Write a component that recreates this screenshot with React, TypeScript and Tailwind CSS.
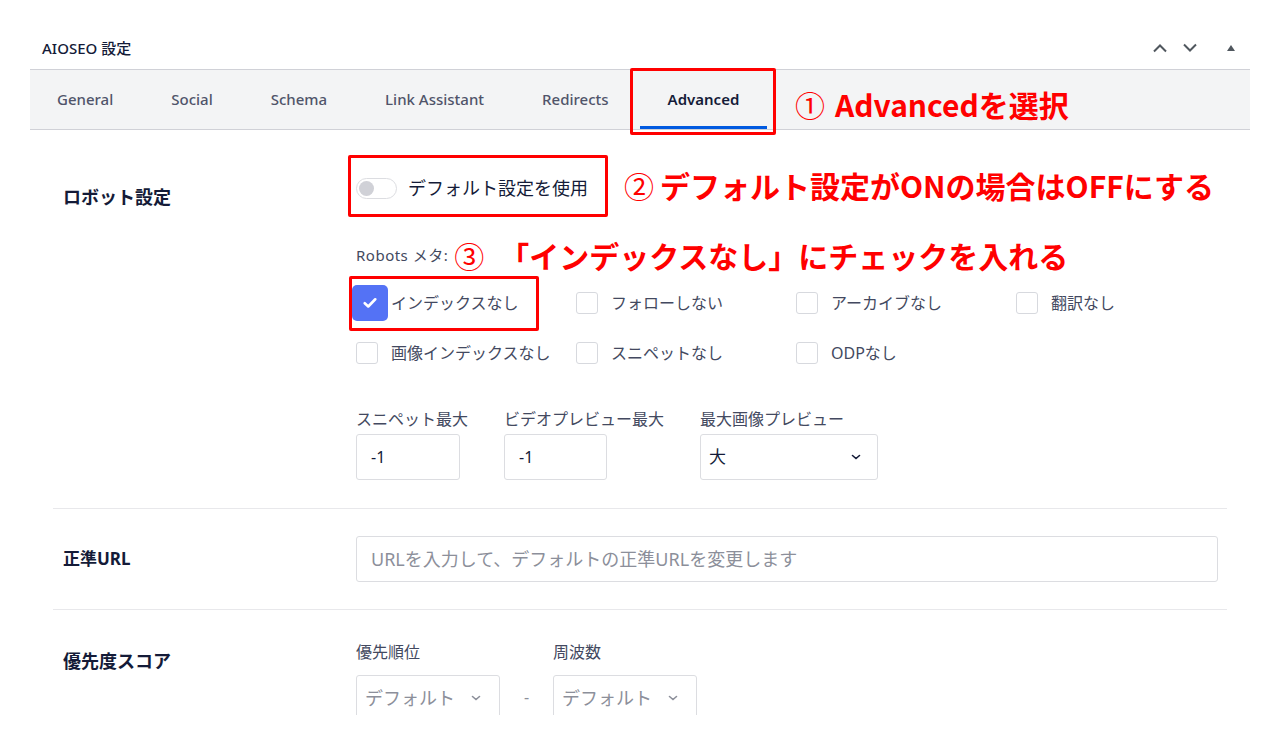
import * as React from "react"

const jp = "font-['Noto_Sans','Noto_Sans_CJK_JP',sans-serif]"

function Chevron({ className = "" }: { className?: string }) {
  return (
    <svg viewBox="0 0 10 6" className={className} fill="none" stroke="currentColor" strokeWidth="1.6" strokeLinecap="round">
      <path d="M1.5 1.5 5 4.5l3.5-3" />
    </svg>
  )
}

function Box({ checked = false }: { checked?: boolean }) {
  if (checked) {
    return (
      <span className="flex h-[36px] w-[36px] items-center justify-center rounded-[5px] bg-[#5472f5]">
        <svg viewBox="0 0 12 10" className="h-[12px] w-[14px]" fill="none" stroke="white" strokeWidth="2.2" strokeLinecap="round" strokeLinejoin="round">
          <path d="M1.5 5.2 4.5 8 10.5 1.8" />
        </svg>
      </span>
    )
  }
  return <span className="h-[22px] w-[22px] rounded-[3px] border border-[#d7d9de] bg-white" />
}

function Check({ label, checked = false }: { label: string; checked?: boolean }) {
  return (
    <div className="flex h-[50px] items-center">
      <div className={checked ? "-ml-[4px] mr-[3px] flex w-[36px]" : "mr-[13px] flex w-[22px]"}>
        <Box checked={checked} />
      </div>
      <span className="text-[16px] text-[#434960]">{label}</span>
    </div>
  )
}

export default function App() {
  const row1 = ["インデックスなし", "フォローしない", "アーカイブなし", "翻訳なし"]
  const row2 = ["画像インデックスなし", "スニペットなし", "ODPなし"]

  return (
    <div className={`h-[746px] w-[1280px] overflow-hidden bg-white ${jp} text-[#141b38]`}>
      <div className="mx-[30px] h-[715px] overflow-hidden">
        {/* header */}
        <div className="flex h-[69px] items-center justify-between pl-[12px] pr-[14px] pt-[27px]">
          <span className="text-[15px] font-medium">AIOSEO 設定</span>
          <div className="flex items-center gap-[14px] text-[#50575e]">
            <svg viewBox="0 0 16 10" className="h-[10px] w-[16px]" fill="none" stroke="currentColor" strokeWidth="2">
              <path d="M2 8.5 8 2.5l6 6" />
            </svg>
            <svg viewBox="0 0 16 10" className="h-[10px] w-[16px]" fill="none" stroke="currentColor" strokeWidth="2">
              <path d="M2 1.5 8 7.5l6-6" />
            </svg>
            <svg viewBox="0 0 10 8" className="ml-[14px] h-[8px] w-[10px]" fill="currentColor">
              <path d="M5 1 9 7H1z" />
            </svg>
          </div>
        </div>

        {/* tabs */}
        <div className="relative flex h-[61px] items-stretch gap-[4px] border-y border-[#d0d1d7] bg-[#f3f4f5]">
          {["General", "Social", "Schema", "Link Assistant", "Redirects"].map((t) => (
            <div key={t} className="flex items-center px-[27px] text-[15px] font-medium text-[#50546a]">
              {t}
            </div>
          ))}
          <div className="flex items-center border-b-[3px] border-[#005ae0] px-[28px] pt-[3px] text-[15px] font-semibold text-[#141b38]">
            Advanced
          </div>
          <div className="absolute left-[600px] top-[-2px] h-[67px] w-[146px] border-[3px] border-[#f00] rounded-[2px]" />
          <div className="absolute left-[765px] top-[12px] flex items-center gap-[10px] text-[30px] font-bold text-[#f00] font-['Noto_Sans_CJK_JP',sans-serif]">
            <span className="font-normal">①</span>
            <span>Advancedを選択</span>
          </div>
        </div>

        {/* content */}
        <div className="mx-[23px]">
          {/* robots */}
          <div className="flex border-b border-[#e8e8eb] pb-[28px]">
            <div className="w-[303px] shrink-0 pl-[10px] pt-[54px] text-[18px] font-bold">ロボット設定</div>
            <div className="relative flex-1">
              <div className="mt-[47px] flex h-[22px] items-center gap-[11px]">
                <span className="flex h-[21px] w-[41px] items-center rounded-full border border-[#dcdde1] bg-white px-[2px]">
                  <span className="h-[15px] w-[15px] rounded-full bg-[#d0d1d7]" />
                </span>
                <span className="text-[18px] text-[#141b38]">デフォルト設定を使用</span>
              </div>
              <div className="absolute left-[-8px] top-[25px] h-[62px] w-[260px] border-[3px] border-[#f00] rounded-[2px]" />
              <div className="absolute left-[268px] top-[33px] flex items-center gap-[6px] text-[30px] font-bold text-[#f00] font-['Noto_Sans_CJK_JP',sans-serif]">
                <span className="font-normal">②</span>
                <span>デフォルト設定がONの場合はOFFにする</span>
              </div>

              <div className="mt-[45px] flex h-[22px] items-center gap-[6px]">
                <span className="text-[15px] tracking-[0.5px] text-[#434960]">Robots メタ:</span>
                <span className="whitespace-nowrap text-[30px] font-bold text-[#f00] font-['Noto_Sans_CJK_JP',sans-serif]">
                  <span className="font-normal">③</span>　「インデックスなし」にチェックを入れる
                </span>
              </div>

              <div className="mt-[12px] grid w-[880px] grid-cols-4">
                {row1.map((l, i) => (
                  <Check key={l} label={l} checked={i === 0} />
                ))}
                {row2.map((l) => (
                  <Check key={l} label={l} />
                ))}
              </div>
              <div className="absolute left-[-7px] top-[146px] h-[55px] w-[190px] border-[3px] border-[#f00] rounded-[2px]" />

              <div className="mt-[29px] flex">
                <div className="flex w-[148px] flex-col gap-[3px]">
                  <span className="text-[16px] text-[#434960]">スニペット最大</span>
                  <div className="flex h-[46px] w-[104px] items-center rounded-[3px] border border-[#dcdde1] px-[14px] text-[16px]">-1</div>
                </div>
                <div className="flex w-[196px] flex-col gap-[3px]">
                  <span className="whitespace-nowrap text-[16px] text-[#434960]">ビデオプレビュー最大</span>
                  <div className="flex h-[46px] w-[103px] items-center rounded-[3px] border border-[#dcdde1] px-[14px] text-[16px]">-1</div>
                </div>
                <div className="flex flex-col gap-[3px]">
                  <span className="text-[16px] text-[#434960]">最大画像プレビュー</span>
                  <div className="flex h-[46px] w-[178px] items-center justify-between rounded-[3px] border border-[#dcdde1] pl-[8px] pr-[16px] text-[17px]">
                    大
                    <Chevron className="h-[6px] w-[10px] text-[#141b38]" />
                  </div>
                </div>
              </div>
            </div>
          </div>

          {/* canonical */}
          <div className="flex items-center border-b border-[#e8e8eb] py-[27px]">
            <div className="w-[303px] shrink-0 pl-[10px] text-[17px] font-bold">正準URL</div>
            <div className="flex h-[46px] w-[862px] items-center rounded-[3px] border border-[#dcdde1] px-[14px] text-[18px] text-[#8c8f9a]">
              URLを入力して、デフォルトの正準URLを変更します
            </div>
          </div>

          {/* priority */}
          <div className="flex">
            <div className="w-[303px] shrink-0 pl-[10px] pt-[38px] text-[18px] font-bold">優先度スコア</div>
            <div className="flex items-end pt-[30px]">
              <div className="flex flex-col gap-[11px]">
                <span className="text-[16px] text-[#434960]">優先順位</span>
                <div className="flex h-[46px] w-[144px] items-center justify-between rounded-[3px] border border-[#dcdde1] pl-[8px] pr-[18px] text-[18px] text-[#8c8f9a]">
                  デフォルト
                  <Chevron className="h-[6px] w-[10px] text-[#8c8f9a]" />
                </div>
              </div>
              <span className="mb-[12px] w-[53px] text-center text-[16px] text-[#8c8f9a]">-</span>
              <div className="flex flex-col gap-[11px]">
                <span className="text-[16px] text-[#434960]">周波数</span>
                <div className="flex h-[46px] w-[144px] items-center justify-between rounded-[3px] border border-[#dcdde1] pl-[8px] pr-[18px] text-[18px] text-[#8c8f9a]">
                  デフォルト
                  <Chevron className="h-[6px] w-[10px] text-[#8c8f9a]" />
                </div>
              </div>
            </div>
          </div>
        </div>
      </div>
    </div>
  )
}
